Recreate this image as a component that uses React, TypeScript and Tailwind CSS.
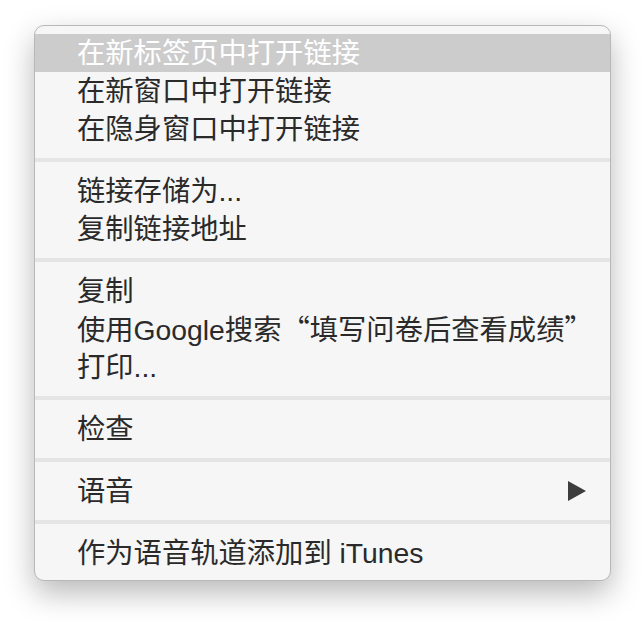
import React from "react";

type Item = { label: React.ReactNode; active?: boolean; submenu?: boolean };

const groups: Item[][] = [
  [
    { label: "在新标签页中打开链接", active: true },
    { label: "在新窗口中打开链接" },
    { label: "在隐身窗口中打开链接" },
  ],
  [{ label: "链接存储为..." }, { label: "复制链接地址" }],
  [
    { label: "复制" },
    {
      label: (
        <>
          使用Google搜索<span className="font-['Noto_Sans_CJK_SC']">“</span>填写问卷后查看成绩
          <span className="font-['Noto_Sans_CJK_SC']">”</span>
        </>
      ),
    },
    { label: "打印..." },
  ],
  [{ label: "检查" }],
  [{ label: "语音", submenu: true }],
  [{ label: "作为语音轨道添加到 iTunes" }],
];

const MenuRow = ({ item }: { item: Item }) => (
  <div
    className={`flex h-[38px] items-center pl-[42px] pr-[24px] ${
      item.active ? "bg-[#cccccc] text-white" : "text-[#2a2a2a]"
    }`}
  >
    <span className="flex-1 whitespace-nowrap">{item.label}</span>
    {item.submenu && (
      <svg width="18" height="20" viewBox="0 0 18 20">
        <polygon points="0,0 18,10 0,20" fill="#3d3d3d" />
      </svg>
    )}
  </div>
);

export default function App() {
  return (
    <div className="h-[622px] w-[644px] bg-white pl-[34px] pt-[25px]">
      <div className="w-[577px] overflow-hidden rounded-[10px] border border-[#b8b8b8] bg-[#f6f6f6] py-[8px] font-['Liberation_Sans','Noto_Sans_CJK_SC',sans-serif] text-[28.3px] leading-[38px] shadow-[0_12px_30px_rgba(0,0,0,0.28)]">
        {groups.map((group, gi) => (
          <div key={gi}>
            {gi > 0 && <div className="my-[10px] h-[4px] bg-[#e5e5e5]" />}
            {group.map((item, i) => (
              <MenuRow key={i} item={item} />
            ))}
          </div>
        ))}
      </div>
    </div>
  );
}
